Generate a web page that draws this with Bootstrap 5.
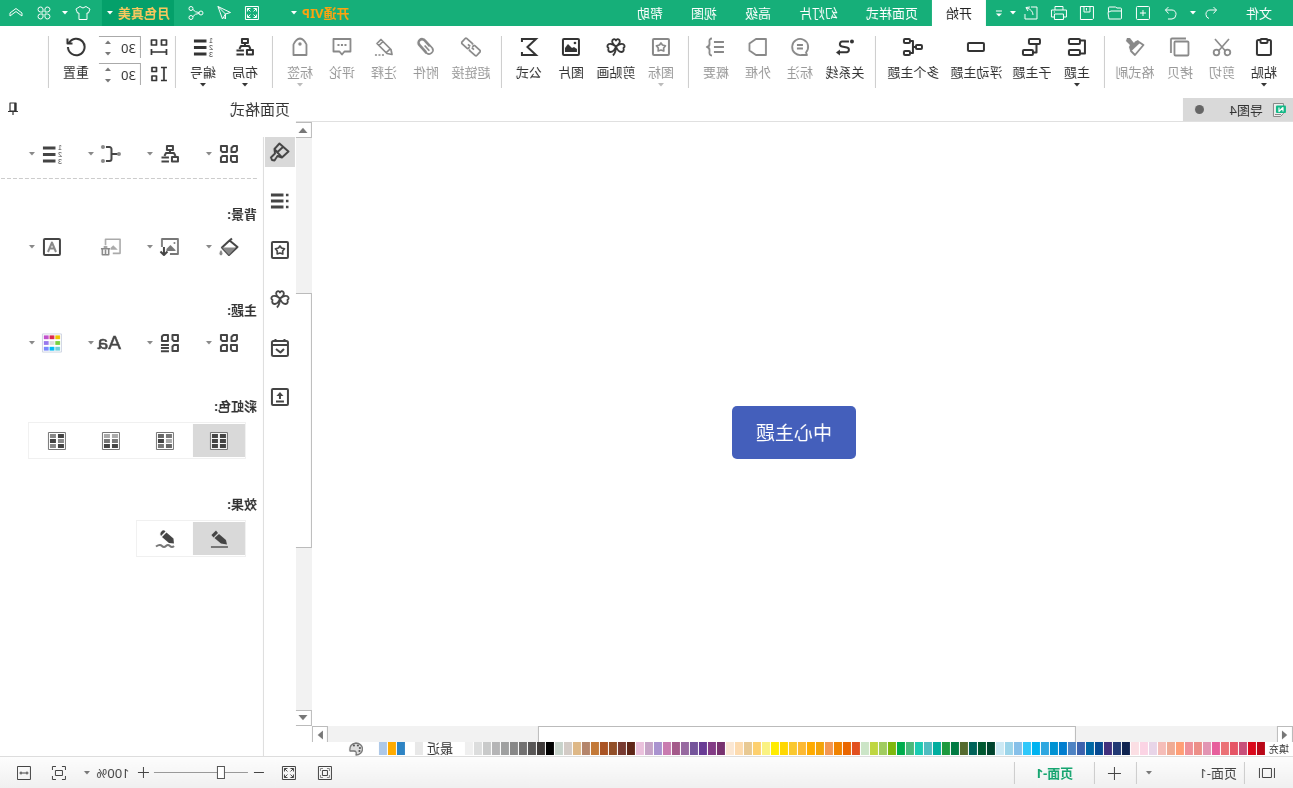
<!DOCTYPE html>
<html lang="zh-CN">
<head>
<meta charset="utf-8">
<meta name="viewport" content="width=device-width, initial-scale=1">
<title>导图4</title>
<link href="https://cdn.jsdelivr.net/npm/bootstrap@5.3.0/dist/css/bootstrap.min.css" rel="stylesheet">
<script src="https://cdn.jsdelivr.net/npm/bootstrap@5.3.0/dist/js/bootstrap.bundle.min.js"></script>
<style>
body{font-family:"Noto Sans","Noto Sans CJK SC",sans-serif;font-size:13px;line-height:20px;color:#333;background:#fff;overflow:hidden}
.mm-app{transform:scaleX(-1)}
button,input,select{font:inherit;color:inherit}
.mm-app button{border:0;background:none;padding:0;white-space:nowrap}
svg{display:block;flex:none;fill:none;stroke:currentColor;stroke-width:2;stroke-linejoin:round}
.ic{width:20px;height:20px}
.caret{width:8px;height:4px;fill:currentColor;stroke:none}
.flip{rotate:180deg}.turn-r{rotate:90deg}.turn-l{rotate:-90deg}
.titlebar{height:26px;background:#16af79;color:#fff}
.titlebar svg.ic{stroke-width:1}
.q-btn{width:28px;height:26px;display:flex;align-items:center;justify-content:center}
.more-btn{width:23px}
.tab-btn{height:26px;padding:0 14px!important}
.tab-btn.active{background:#fff!important;color:#222}
.file-btn{width:68px;height:26px}
.vip{color:#ffa30f;font-weight:700}
.user-btn{width:72px;height:26px;margin-right:9px;background:#04a06a!important;color:#fac85e;font-weight:700}
.apps-btn{margin-left:3px}
.fold-btn{margin-right:2px}
.ribbon{height:72px;padding-left:2px}
.r-group{height:52px;margin-top:10px;padding:0 6px;border-right:1px solid #ccc}
.r-item{width:42px;height:52px;color:#333;padding-top:1px!important}
.r-item span{margin:5px 0 1px}
.r-item.w3{width:48px}.r-item.w4{width:63px}
.r-item.off{color:#999}
.r-item.off svg{color:#888}
.r-item.off svg.caret{color:#bbb}
.spins{gap:5px}
.spin{width:42px;height:22px;border-top:1px solid #aaa;border-left:1px solid #aaa}
.spin input{width:28px;border:0;padding:0 0 0 4px;outline:0;background:none}
.spin .caret{color:#777}
.reset-btn{margin-left:2px}
.doc-tabs{height:24px;border-bottom:1px solid #e0e0e0}
.doc-tab{width:110px;height:23px;padding-left:4px;gap:6px;background:#d9d9d9}
.dot{width:9px;height:9px;border-radius:50%;background:#666;margin-right:12px}
.node{position:absolute;left:437px;top:284px;width:124px;height:53px;border-radius:5px;background:#445fbb;color:#fff;font-size:19px;line-height:54px;text-align:center}
.vbar{width:16px;background:#f2f2f2}
.hbar{height:16px;background:#f2f2f2}
.sb-corner{width:16px}
.sb-btn{width:16px;height:16px;background:#fff;border:1px solid #bbb;color:#777;display:flex;align-items:center;justify-content:center}
.sb-btn .caret{width:12px;height:6px}
.vbar .sb-btn{border-right:0}.hbar .sb-btn{border-bottom:0}
.v-thumb{background:#fff;border:1px solid #bbb;border-right:0}
.h-thumb{background:#fff;border:1px solid #bbb;border-bottom:0}
.swatches{height:14px}
.sw-list{gap:1px}
.sw-list i{width:8px;height:13px}
.fill-label{font-size:10px;line-height:14px;width:24px}
.side{width:296px}
.side-title{height:39px;font-size:15px;line-height:22px;padding:0 3px 0 6px}
.side-nav{width:32px;gap:19px}
.side-nav button,.nav-cell{width:30px;height:30px;display:flex;align-items:center;justify-content:center;color:#444}
.side-nav .active{background:#d9d9d9}
.side-body{border-left:1px solid #ddd;padding:7px 0 0 6px}
.p-row button{width:59px;height:20px;display:flex;align-items:center;gap:6px;padding-left:18px;color:#444}
.p-row .caret{color:#888}
.p-head{font-size:13px;font-weight:700;height:20px;margin:43px 0 0;line-height:20px}
.p-head+.p-row{margin-top:13px}
.p-head+.seg{margin-top:6px}
.dash{height:1px;margin:14px 0 -18px;background:repeating-linear-gradient(90deg,#ccc 0 4px,transparent 4px 6px)}
.seg+.p-head{margin-top:35px}
.seg{border:1px solid #f0f0f0;padding:1px 2px 1px 0;height:37px;margin-left:11px;gap:2px;width:fit-content}
.seg button{width:52px;height:33px;display:flex;align-items:center;justify-content:center;color:#444}
.seg .active{background:#d9d9d9!important}
.statusbar{height:32px;border-top:1px solid #ddd;background:linear-gradient(#fdfdfd,#f0f0f0);color:#444}
.statusbar svg{stroke-width:1}
.statusbar .caret{color:#777}
.vsep{width:1px;height:22px;background:#ccc}
.page-sel{width:87px;border:0;background:none;appearance:none;outline:0;padding:0 0 0 3px}
.add-btn{width:41px}
.page-on{width:79px;color:#16a570!important;font-weight:700}
.zoom-range{width:94px;height:14px;margin:0 3px;appearance:none;background:linear-gradient(#999,#999) center/100% 1px no-repeat}
.zoom-range::-webkit-slider-thumb{appearance:none;width:8px;height:13px;border:1px solid #555;background:#fff}
.zm{width:16px;display:flex;justify-content:center}
.zm-val{width:44px}
.fit-center{margin-left:10px}
.fit-width{margin:0 10px 0 7px}
.aa{font:19px/20px "Liberation Sans",sans-serif;-webkit-text-stroke:.5px;width:20px}
.svg-store{position:absolute}
</style>
</head>
<body>
<svg width="0" height="0" class="svg-store" aria-hidden="true">
<symbol id="caret" viewBox="0 0 8 4"><path d="M1 0h6L4 3.500z"/></symbol>
<symbol id="undo" viewBox="0 0 20 20"><path d="M7.500 4L4.500 7l3 3.500M4.500 7H11a4 4 0 0 1 4 4.500q0 3-3 4"/></symbol>
<symbol id="redo" viewBox="0 0 20 20"><path d="M12.500 4l3 3-3 3.500M15.500 7H9a4 4 0 0 0-4 4.500q0 4 4 4.500h4"/></symbol>
<symbol id="newf" viewBox="0 0 20 20"><rect x="3.500" y="3.500" width="13" height="13" rx="1"/><path d="M10 7v6M7 10h6"/></symbol>
<symbol id="open" viewBox="0 0 20 20"><path d="M3.500 15.500V8H14l3 1.500-1 6.500H4.500zM3.500 9V6q0-1 1-1H8l1.500-1h6q1 0 1 1v4"/></symbol>
<symbol id="save" viewBox="0 0 20 20"><path d="M3.500 3.500h13v13h-12l-1-1zM7 3.500V9h6V3.500M10.500 5v2.500"/></symbol>
<symbol id="print" viewBox="0 0 20 20"><path d="M6 7V3.500h8V7M5.500 14h-3V7h15v7h-3M5.500 11h9v5.500h-9zM14 9h1"/></symbol>
<symbol id="export" viewBox="0 0 20 20"><path d="M10 4H4v12h12v-5M8 12q0-5 6-7m-3-1l4 .5-2 3.500"/></symbol>
<symbol id="more" viewBox="0 0 20 20"><path d="M7 8h6"/><path d="M7 10.500h6L10 13.500z" fill="currentColor" stroke="none"/></symbol>
<symbol id="expand" viewBox="0 0 20 20"><rect x="3.500" y="3.500" width="13" height="13"/><path d="M5.500 8.500v-3h3M11.500 5.500h3v3M14.500 11.500v3h-3M8.500 14.500h-3v-3M5.500 5.500l3 3M14.500 5.500l-3 3M14.500 14.500l-3-3M5.500 14.500l3-3"/></symbol>
<symbol id="send" viewBox="0 0 20 20"><path d="M16 3.500L3.500 9.500l5 1.500 3 5zM16 3.500L8.500 11v5l2-2"/></symbol>
<symbol id="share" viewBox="0 0 20 20"><circle cx="5" cy="10" r="2"/><circle cx="15" cy="5.500" r="2"/><circle cx="15" cy="14.500" r="2"/><path d="M7 9.500q4 0 6-3M7 10.500q4 0 6 3"/></symbol>
<symbol id="shirt" viewBox="0 0 20 20"><path d="M7 3.500L3 6l1.500 4H6v6.500h8V10h1.500L17 6l-4-2.500q-3 3-6 0z"/></symbol>
<symbol id="clover4" viewBox="0 0 20 20"><path d="M9 9V6a2.500 2.500 0 1 0-2.500 3zM11 9V6a2.500 2.500 0 1 1 2.500 3zM9 11v3a2.500 2.500 0 1 1-2.500-3zM11 11v3a2.500 2.500 0 1 0 2.500-3z"/></symbol>
<symbol id="chev" viewBox="0 0 20 20"><path d="M4 10l6-4.500 6 4.500v3l-6-4.500-6 4.500z"/></symbol>
<symbol id="paste" viewBox="0 0 20 20"><rect x="3" y="3" width="14" height="15" rx="1.500"/><rect x="6.500" y="2" width="7" height="4" rx="1" fill="#fff"/></symbol>
<symbol id="cut" viewBox="0 0 20 20"><path stroke-width="1.600" d="M3 2l10.500 12M17 2L6.500 14"/><g stroke-width="1.800"><circle cx="4.500" cy="15.500" r="2.800"/><circle cx="15.500" cy="15.500" r="2.800"/></g></symbol>
<symbol id="copy" viewBox="0 0 20 20"><g stroke-width="1.800"><rect x="1.500" y="4.500" width="14" height="14" rx="1"/><path d="M4 1.500h14a1 1 0 0 1 1 1V16"/></g></symbol>
<symbol id="brush" viewBox="0 0 20 20"><path d="M6 5L1.500 8 10 18l4-4" stroke-width="1.800"/><path d="M7 3l3 1.500L11 6l4-5 3 0 1 3-4 4 1 2-1.500 5L4.500 5.500z" fill="currentColor" stroke="none"/></symbol>
<symbol id="topic" viewBox="0 0 20 20"><rect x="7" y="2" width="11" height="5" rx="1"/><rect x="7" y="13" width="11" height="5" rx="1"/><path d="M7 3.500H2v13h5"/></symbol>
<symbol id="sub" viewBox="0 0 20 20"><rect x="2" y="2" width="11" height="5" rx="1"/><rect x="9" y="13" width="10" height="5" rx="1"/><path d="M5.500 7v8.500H9"/></symbol>
<symbol id="float" viewBox="0 0 20 20"><rect x="2" y="6" width="16" height="8" rx="1"/></symbol>
<symbol id="multi" viewBox="0 0 20 20"><rect x="1" y="8" width="6" height="4" rx="1"/><rect x="13" y="2" width="6" height="4" rx="1"/><rect x="13" y="14" width="6" height="4" rx="1"/><path d="M7 10h3M13 4h-3v12h3"/></symbol>
<symbol id="rel" viewBox="0 0 20 20"><path d="M6 4.500h6a2.500 2.500 0 0 1 1 5L8 10.500a2.400 2.400 0 0 0 0 4.700h7"/><circle cx="3" cy="4.500" r="1" fill="currentColor"/><path d="M15 12.500l4 3-4 3z" fill="currentColor" stroke="none"/></symbol>
<symbol id="note" viewBox="0 0 20 20"><g stroke-width="1.800"><path d="M4 15.500A8 8 0 1 1 8 17.800L3 18z"/><path d="M7 8h6M7 11.500h6"/></g></symbol>
<symbol id="frame" viewBox="0 0 20 20"><path stroke-width="1.800" d="M2 2h10l6.500 4.500v7L12 18H2z"/></symbol>
<symbol id="brace" viewBox="0 0 20 20"><g stroke-width="1.800"><path d="M2 5h10M2 10h10M2 15h10M14 1.500q3 0 2.500 4-.5 4 2.500 4.500-3 .5-2.500 4.500.5 4-2.500 4"/></g></symbol>
<symbol id="star" viewBox="0 0 20 20"><rect x="2" y="2" width="16" height="16" rx="1"/><path d="M10 6l1.500 2 3 .8-1.800 2.200.1 3-2.800-1-2.800 1 .1-3L5.500 8.800l3-.8z" stroke-width="1.700"/></symbol>
<symbol id="clover" viewBox="0 0 20 20"><path stroke-width="1.800" d="M10 9.500Q5 6 6.500 3.200 8.500 1 10 3.500 11.500 1 13.500 3.200 15 6 10 9.500zM10 9.500Q6 6 3 7q-3 2-.5 4-1 3.500 2 4Q8 15 10 9.500zM10 9.500Q14 6 17 7q3 2 .5 4 1 3.500-2 4Q12 15 10 9.500zM10 9.500q0 6 3 9"/></symbol>
<symbol id="image" viewBox="0 0 20 20"><rect x="2" y="2" width="16" height="16" rx="1"/><path d="M4 15v-3l3-2 2 1 4-4 3 4v4z" fill="currentColor" stroke="none"/><circle cx="6" cy="6" r="1.300" fill="currentColor" stroke="none"/></symbol>
<symbol id="sigma" viewBox="0 0 20 20"><path d="M17 5V2H3l8.500 8L3 18h14v-3" stroke-linejoin="miter"/></symbol>
<symbol id="link" viewBox="0 0 20 20"><g stroke-width="1.700" transform="rotate(-42 10 10)"><path d="M9 12.500v1H1a1 1 0 0 1-1-1v-5a1 1 0 0 1 1-1h7a1 1 0 0 1 1 1V9M11 7.500v-1h8a1 1 0 0 1 1 1v5a1 1 0 0 1-1 1h-7a1 1 0 0 1-1-1V11M6 10h3M11 10h3"/></g></symbol>
<symbol id="clip" viewBox="0 0 20 20"><path stroke-width="1.700" transform="rotate(42 10 10)" d="M7 12V4a3 3 0 0 1 6 0v10M13.500 8V15a3.800 3.800 0 0 1-7.500 0V4.500a4 4 0 0 1 8-.5v11M10 8v7"/></symbol>
<symbol id="pencil" viewBox="0 0 20 20"><g stroke-width="1.700"><path d="M2 17.500l1-5L13 2.500l4 4-10 10zM11 4.500l4 4M4 12l4 4"/><path d="M10 18h9" stroke-dasharray="2 1.500"/></g></symbol>
<symbol id="comment" viewBox="0 0 20 20"><g stroke-width="1.800"><path d="M1.500 2h17v12.500h-6L10 17.500l-2.500-3h-6z"/><path d="M5.500 8h9" stroke-dasharray="2 1.500"/></g></symbol>
<symbol id="tag" viewBox="0 0 20 20"><path stroke-width="1.800" d="M3.500 18V7.500Q6 2 10 1.500q4 .5 6.500 6V18z"/><circle cx="10" cy="7" r="1.700" fill="currentColor" stroke="none"/></symbol>
<symbol id="org" viewBox="0 0 20 20"><rect x="7" y="2" width="6" height="4"/><path d="M10 6v3M4.500 12L6 9h8l1.500 3"/><rect x="2" y="13" width="6" height="4.500"/><path d="M11 13.500h7.500M11 17.500h7.500"/></symbol>
<symbol id="hgap" viewBox="0 0 20 20"><g stroke-width="1.700"><rect x="2.500" y="3" width="5" height="5"/><rect x="12.500" y="3" width="5" height="5"/><path d="M2.500 12v6M17.500 12v6M2.500 15h15"/></g></symbol>
<symbol id="vgap" viewBox="0 0 20 20"><g stroke-width="1.700"><path d="M2 3.500h6M2 16.500h6M5 3.500v13"/><rect x="12.500" y="3.500" width="4.500" height="4"/><rect x="12.500" y="12" width="4.500" height="4.500"/></g></symbol>
<symbol id="reset" viewBox="0 0 20 20"><path d="M17 6A8.300 8.300 0 1 0 18 10M18.500 1.500v5h-5"/></symbol>
<symbol id="pin" viewBox="0 0 20 20"><path stroke-width="1.200" d="M7 5h6v8H7zM5 13.500h10M10 13v4"/><path d="M7.800 5v8" stroke-width="2"/></symbol>
<symbol id="doc" viewBox="0 0 20 20"><path d="M5.500 3.500h10v13h-7l-3-3z" stroke="#888" stroke-width="1" fill="#eee"/><path d="M8 14.500h6" stroke="#888" stroke-width="1"/><rect x="3" y="5.500" width="10" height="7.500" rx="1" fill="#12b886" stroke="none"/><path d="M6 11.500v-4l4 4v-4" stroke="#fff" stroke-width="1.200"/></symbol>
<symbol id="fmt" viewBox="0 0 20 20"><path stroke-width="1.900" d="M10.500 1.500L1.500 9.500l6.500 6 7.500-8.500zM7 5l6.500 6M15.500 7.500l-.5 4 4 4-1 2.500-2.500.5-3-4.500-4.500 1.500"/></symbol>
<symbol id="list" viewBox="0 0 20 20"><path d="M6.500 4H19M6.500 10H19M6.500 16H19" stroke-width="2.800"/><path d="M1.500 4H4M1.500 10H4M1.500 16H4" stroke-width="2.400"/></symbol>
<symbol id="cal" viewBox="0 0 20 20"><rect x="2" y="3" width="16" height="15" rx="1.500"/><path d="M2 7h16M5.500 1v3M14.500 1v3M6 11l3.500 3.500L14 11" /></symbol>
<symbol id="up" viewBox="0 0 20 20"><rect x="2" y="2" width="16" height="16" rx="1"/><path d="M10 12V7M6 14.500h8"/><path d="M6.500 9L10 5l3.500 4z" fill="currentColor" stroke="none"/></symbol>
<symbol id="grid4" viewBox="0 0 20 20"><path d="M2 2h3.500l2 2v4H3.500L2 6.500zM12 2h6v4.500L16.500 8H12zM2 12h6v4.500L6.500 18H2zM12 12h4.500L18 13.500V18h-6z"/></symbol>
<symbol id="gridl" viewBox="0 0 20 20"><path d="M2 2h5.500v4.500L6 8H2zM12 2h4.500L18 3.500V8h-6zM2 12h4l1.500 1.500V18H2zM11 12h8M11 15h8M11 18.200h8"/></symbol>
<symbol id="branch" viewBox="0 0 20 20"><path d="M3 10h6M15 3h-3.500a2 2 0 0 0-2 2v10a2 2 0 0 0 2 2H15"/><g fill="#888" stroke="none"><circle cx="2" cy="10" r="2"/><circle cx="18" cy="3" r="2"/><circle cx="18" cy="17" r="2"/></g></symbol>
<symbol id="bucket" viewBox="0 0 20 20"><path d="M7 1.500l3 2.500 7 6.500L10 18l-8.500-8L10 3"/><path d="M3 10.500h14L10 18z" fill="#888" stroke="none"/><path d="M18 13q3 4 0 5.500-3-1.500 0-5.500z" fill="#888" stroke="none"/></symbol>
<symbol id="imgdown" viewBox="0 0 20 20"><path d="M10 17H2V2h16v8" stroke="#777" stroke-width="1.800"/><path d="M4.500 13l5-5 4 4v2h-9z" fill="#777" stroke="none"/><circle cx="5.500" cy="6" r="1" fill="#777" stroke="none"/><path d="M16 10v7M12.500 14.500L16 18l3.500-3.500"/></symbol>
<symbol id="imgdel" viewBox="0 0 22 20"><path d="M9 17H1V1.500h16v6.500" stroke="#aaa" stroke-width="1.800"/><path d="M3.500 13l5-5 3 3v2z" fill="#aaa" stroke="none"/><path d="M12 12h10M15 10h4M13.500 12v6.500h7V12M17 13v5" stroke="#888" stroke-width="1.700"/></symbol>
<symbol id="boxa" viewBox="0 0 20 20"><rect x="2" y="2" width="16" height="16" rx="1"/><path d="M6 15l4-9.500L14 15M7.500 11.500h5" stroke="#888"/></symbol>
<symbol id="colors" viewBox="0 0 21 20"><rect x=".5" y=".5" width="20" height="19" stroke="#ccd3e0" stroke-width="1"/><g stroke="none"><path fill="#ecc400" d="M2 2h5v4H2z"/><path fill="#dc2850" d="M8 2h5v4H8z"/><path fill="#c050cc" d="M14 2h5v4h-5z"/><path fill="#78d040" d="M2 8h5v4H2z"/><path fill="#ddd" d="M8 8h5v4H8z"/><path fill="#9878ec" d="M14 8h5v4h-5z"/><path fill="#6cd0dc" d="M2 14h5v4H2z"/><path fill="#00bcf4" d="M8 14h5v4H8z"/><path fill="#7888fc" d="M14 14h5v4h-5z"/></g></symbol>
<symbol id="tile" viewBox="0 0 20 20"><rect x="1.500" y="1.500" width="17" height="17" fill="#fff" fill-opacity=".7" stroke="#777" stroke-width="1"/><g stroke="none"><path fill="var(--a)" d="M3 3h6v4H3z"/><path fill="var(--b)" d="M11 3h6v4h-6z"/><path fill="var(--c)" d="M3 8h6v4H3z"/><path fill="var(--d)" d="M11 8h6v4h-6z"/><path fill="var(--e)" d="M3 13h6v4H3z"/><path fill="var(--f)" d="M11 13h6v4h-6z"/></g></symbol>
<symbol id="pen1" viewBox="0 0 20 20"><path d="M1 18h17" stroke="#777"/><path d="M2 15.500l1-4.500L10 5l4.500 4-6.500 5.500zM11 4l2-2.500L17.500 6l-2 2.500z" fill="currentColor" stroke="none"/></symbol>
<symbol id="pen2" viewBox="0 0 20 20"><path d="M1 17q2 2 4 0t4 0 4 0 6 .5" stroke="#777"/><path d="M1 14.500l.5-5L8.500 3.500 13 8l-7 6zM9.500 2.500q2-2.500 4 0 2 2 .5 4.500z" fill="currentColor" stroke="none"/></symbol>
<symbol id="palette" viewBox="0 0 20 20"><path d="M10 4a6.500 6 0 1 0 0 12q-1-4 2-4h4Q17 5 10 4z" fill="#ddd" stroke="#777" stroke-width="1.300"/><path d="M6 9h.1M8 6.500h.1M12 6.500h.1M6.500 12h.1" stroke="#555" stroke-linecap="round"/></symbol>
<symbol id="slides" viewBox="0 0 20 20"><path d="M5.500 5.500h9v9h-9zM2.500 5v10M17.500 5v10"/></symbol>
<symbol id="plus" viewBox="0 0 20 20"><path d="M10.500 4v13M4 10.500h13"/></symbol>
<symbol id="fitp" viewBox="0 0 20 20"><rect x="3.500" y="3.500" width="13" height="13"/><rect x="7.500" y="7.500" width="5" height="5"/><path d="M5.500 8V5.500H8M12 5.500h2.500V8M14.500 12v2.500H12M8 14.500H5.500V12" stroke="#888"/></symbol>
<symbol id="fitc" viewBox="0 0 20 20"><rect x="6.500" y="7.500" width="7" height="5"/><path d="M3.500 7V3.500H7M13 3.500h3.500V7M16.500 13v3.500H13M7 16.500H3.500V13"/></symbol>
<symbol id="fitw" viewBox="0 0 20 20"><rect x="3.500" y="3.500" width="13" height="13"/><path d="M5.500 10h9M7 8.500v3M13 8.500v3"/></symbol>
</svg>

<div class="mm-app d-flex flex-column vh-100">
<header class="titlebar d-flex align-items-center">
 <button class="file-btn">文件</button>
 <button class="q-btn" aria-label="撤销"><svg class="ic"><use href="#undo"/></svg></button>
 <button class="me-1" aria-label="撤销列表"><svg class="caret"><use href="#caret"/></svg></button>
 <button class="q-btn" aria-label="恢复"><svg class="ic"><use href="#redo"/></svg></button>
 <button class="q-btn" aria-label="新建"><svg class="ic"><use href="#newf"/></svg></button>
 <button class="q-btn" aria-label="打开"><svg class="ic"><use href="#open"/></svg></button>
 <button class="q-btn" aria-label="保存"><svg class="ic"><use href="#save"/></svg></button>
 <button class="q-btn" aria-label="打印"><svg class="ic"><use href="#print"/></svg></button>
 <button class="q-btn" aria-label="导出"><svg class="ic"><use href="#export"/></svg></button>
 <button aria-label="导出列表"><svg class="caret"><use href="#caret"/></svg></button>
 <button class="more-btn" aria-label="更多"><svg class="ic"><use href="#more"/></svg></button>
 <nav class="d-flex">
  <button class="tab-btn active">开始</button><button class="tab-btn">页面样式</button><button class="tab-btn">幻灯片</button><button class="tab-btn">高级</button><button class="tab-btn">视图</button><button class="tab-btn">帮助</button>
 </nav>
 <button class="vip ms-auto d-flex align-items-center gap-1 me-4">开通VIP <svg class="caret text-white"><use href="#caret"/></svg></button>
 <button class="q-btn" aria-label="全屏"><svg class="ic"><use href="#expand"/></svg></button>
 <button class="q-btn" aria-label="发送"><svg class="ic"><use href="#send"/></svg></button>
 <button class="q-btn me-2" aria-label="分享"><svg class="ic"><use href="#share"/></svg></button>
 <button class="user-btn d-flex align-items-center justify-content-center gap-1">月色真美<svg class="caret text-white"><use href="#caret"/></svg></button>
 <button aria-label="皮肤" class="d-flex align-items-center gap-1"><svg class="ic"><use href="#shirt"/></svg><svg class="caret"><use href="#caret"/></svg></button>
 <button class="q-btn apps-btn" aria-label="应用"><svg class="ic"><use href="#clover4"/></svg></button>
 <button class="q-btn fold-btn" aria-label="收起"><svg class="ic"><use href="#chev"/></svg></button>
</header>

<div class="ribbon d-flex">
 <div class="r-group d-flex" data-items="paste:粘贴:v,cut:剪切:x,copy:拷贝:x,brush:格式刷:x"></div>
 <div class="r-group d-flex" data-items="topic:主题:v,sub:子主题,float:浮动主题,multi:多个主题"></div>
 <div class="r-group d-flex" data-items="rel:关系线,note:标注:x,frame:外框:x,brace:概要:x"></div>
 <div class="r-group d-flex" data-items="star:图标:xv,clover:剪贴画,image:图片,sigma:公式"></div>
 <div class="r-group d-flex" data-items="link:超链接:x,clip:附件:x,pencil:注释:x,comment:评论:x,tag:标签:xv"></div>
 <div class="r-group d-flex" data-items="org:布局:v,nums:编号:v"></div>
 <div class="r-group d-flex">
  <div class="spins d-flex flex-column">
   <div class="d-flex align-items-center"><label for="hg" class="me-2" aria-label="水平间距"><svg class="ic"><use href="#hgap"/></svg></label><div class="spin d-flex align-items-center"><input id="hg" value="30"><div class="d-flex flex-column gap-2"><button aria-label="增加"><svg class="caret flip"><use href="#caret"/></svg></button><button aria-label="减少"><svg class="caret"><use href="#caret"/></svg></button></div></div></div>
   <div class="d-flex align-items-center"><label for="vg" class="me-2" aria-label="垂直间距"><svg class="ic"><use href="#vgap"/></svg></label><div class="spin d-flex align-items-center"><input id="vg" value="30"><div class="d-flex flex-column gap-2"><button aria-label="增加"><svg class="caret flip"><use href="#caret"/></svg></button><button aria-label="减少"><svg class="caret"><use href="#caret"/></svg></button></div></div></div>
  </div>
  <button class="r-item reset-btn d-flex flex-column align-items-center"><svg class="ic"><use href="#reset"/></svg><span>重置</span></button>
 </div>
</div>

<div class="d-flex flex-fill">
 <main class="d-flex flex-column flex-fill">
  <div class="doc-tabs d-flex"><div class="doc-tab d-flex align-items-center"><svg class="ic"><use href="#doc"/></svg><span>导图4</span><span class="dot ms-auto"></span></div></div>
  <div class="d-flex flex-fill">
   <div class="position-relative flex-fill"><div class="node">中心主题</div></div>
   <div class="vbar d-flex flex-column"><span class="sb-btn"><svg class="caret flip"><use href="#caret"/></svg></span><span style="flex:155"></span><span class="v-thumb" style="flex:254"></span><span style="flex:162"></span><span class="sb-btn"><svg class="caret"><use href="#caret"/></svg></span></div>
  </div>
  <div class="d-flex"><div class="hbar d-flex flex-fill"><span class="sb-btn"><svg class="caret turn-r"><use href="#caret"/></svg></span><span style="flex:201"></span><span class="h-thumb" style="flex:538"></span><span style="flex:210"></span><span class="sb-btn"><svg class="caret turn-l"><use href="#caret"/></svg></span></div><div class="sb-corner"></div></div>
  <div class="swatches d-flex ps-1"><span class="fill-label">填充</span><div class="sw-list d-flex" id="fills"></div><span class="px-1 ms-2 lh-1">最近</span><div class="sw-list d-flex" id="recent"></div><svg class="ms-3" width="14" height="14" viewBox="3 3 14 14"><use href="#palette" width="20" height="20"/></svg></div>
 </main>
 <aside class="side d-flex flex-column">
  <div class="side-title d-flex justify-content-between align-items-start"><span>页面格式</span><button aria-label="固定"><svg class="ic"><use href="#pin"/></svg></button></div>
  <div class="d-flex flex-fill">
   <nav class="side-nav d-flex flex-column align-items-center">
    <button class="active" aria-label="页面格式"><svg class="ic"><use href="#fmt"/></svg></button>
    <button aria-label="大纲"><svg class="ic"><use href="#list"/></svg></button><button aria-label="图标"><svg class="ic"><use href="#star"/></svg></button><button aria-label="剪贴画"><svg class="ic"><use href="#clover"/></svg></button><button aria-label="任务"><svg class="ic"><use href="#cal"/></svg></button><button aria-label="导出"><svg class="ic"><use href="#up"/></svg></button>
   </nav>
   <div class="side-body flex-fill">
    <div class="p-row d-flex" data-icons="grid4,org,branch,nums"></div>
    <div class="dash"></div>
    <h2 class="p-head">背景:</h2>
    <div class="p-row d-flex" data-icons="bucket,imgdown,imgdel-,boxa"></div>
    <h2 class="p-head">主题:</h2>
    <div class="p-row d-flex" data-icons="grid4,gridl,Aa,colors"></div>
    <h2 class="p-head">彩虹色:</h2>
    <div class="seg d-flex">
     <button class="active" style="--a:#444;--b:#444;--c:#444;--d:#444;--e:#444;--f:#444" aria-label="配色一"><svg class="ic"><use href="#tile"/></svg></button>
     <button style="--a:#777;--b:#666;--c:#aaa;--d:#444;--e:#666;--f:#777" aria-label="配色二"><svg class="ic"><use href="#tile"/></svg></button>
     <button style="--a:#aaa;--b:#aaa;--c:#777;--d:#777;--e:#444;--f:#444" aria-label="配色三"><svg class="ic"><use href="#tile"/></svg></button>
     <button style="--a:#444;--b:#888;--c:#888;--d:#444;--e:#444;--f:#888" aria-label="配色四"><svg class="ic"><use href="#tile"/></svg></button>
    </div>
    <h2 class="p-head">效果:</h2>
    <div class="seg d-flex"><button class="active" aria-label="直线"><svg class="ic"><use href="#pen1"/></svg></button><button aria-label="手绘"><svg class="ic"><use href="#pen2"/></svg></button></div>
   </div>
  </div>
 </aside>
</div>

<footer class="statusbar d-flex align-items-center">
 <button class="ms-3 me-2 pe-1" aria-label="页面列表"><svg class="ic"><use href="#slides"/></svg></button>
 <span class="vsep"></span>
 <select class="page-sel ms-1" aria-label="页面"><option>页面-1</option></select><svg class="caret me-2"><use href="#caret"/></svg>
 <span class="vsep"></span>
 <button class="add-btn d-flex justify-content-center" aria-label="添加页面"><svg class="ic"><use href="#plus"/></svg></button>
 <span class="vsep"></span>
 <button class="page-on">页面-1</button>
 <span class="vsep"></span>
 <div class="ms-auto d-flex align-items-center">
  <button class="q-btn me-2" aria-label="适应页面"><svg class="ic"><use href="#fitp"/></svg></button>
  <button class="q-btn me-2" aria-label="全屏"><svg class="ic"><use href="#expand"/></svg></button>
  <button class="zm" aria-label="缩小"><svg width="12" height="12" viewBox="0 0 12 12"><path d="M1 5.500h10"/></svg></button>
  <input type="range" class="zoom-range" min="0" max="100" value="27" aria-label="缩放">
  <button class="zm" aria-label="放大"><svg width="12" height="12" viewBox="0 0 12 12"><path d="M0 5.500h11M5.500 0v11"/></svg></button>
  <button class="zm-val">100%</button><svg class="caret"><use href="#caret"/></svg>
  <button class="q-btn fit-center" aria-label="居中"><svg class="ic"><use href="#fitc"/></svg></button>
  <button class="q-btn fit-width" aria-label="适应宽度"><svg class="ic"><use href="#fitw"/></svg></button>
 </div>
</footer>
</div>
<script>
const numbered='<svg class="ic" viewBox="0 0 20 20"><path d="M6.500 4H19M6.500 10.500H19M6.500 17H19" stroke-width="3"/><g fill="currentColor" stroke="none" font-family="Liberation Sans" font-size="7"><text x="0" y="6">1</text><text x="0" y="13">2</text><text x="0" y="20">3</text></g></svg>';
const ico=(n,c='ic')=>n==='nums'?numbered:`<svg class="${c}"><use href="#${n}"/></svg>`;
document.querySelectorAll('[data-items]').forEach(g=>{
 g.innerHTML=g.dataset.items.split(',').map(s=>{
  const [i,t,f='']=s.split(':');
  return `<button class="r-item w${t.length} ${f.includes('x')?'off':''} d-flex flex-column align-items-center">${ico(i)}<span>${t}</span>${f.includes('v')?ico('caret','caret'):''}</button>`;
 }).join('');
});
document.querySelectorAll('[data-icons]').forEach(g=>{
 g.innerHTML=g.dataset.icons.split(',').map(n=>{
  const bare=n.endsWith('-'),id=n.replace('-','');
  return `<button aria-label="${id}">${id==='Aa'?'<span class="aa">Aa</span>':ico(id)}${bare?'':ico('caret','caret')}</button>`;
 }).join('');
});
const paint=(id,s)=>document.getElementById(id).innerHTML=s.split(' ').map(c=>`<i style="background:#${c}"></i>`).join('');
paint('fills','b90718 da091b c8507a e65566 eb7176 e75f9c e295b3 ec8f88 ee9199 ff9f76 efab94 f5bdb8 e8d5e8 fbd4e4 fbdfe4 0f2350 213974 41307d 074a92 0068a5 3c62ad 4e83c3 007dcf 0092d3 2ea7e0 00b3f0 2fc8fa 87c0e9 9cd5ea cce9f4 00442e 005830 006359 556b2f 007b43 1d9a3e 00ae9f 4fbcc0 1bcbb2 49b97b 00ad4d 7fb80e a1cc60 bfd641 cce5c7 e2501f ea6700 f08300 f39752 f3a40a ffab00 fdb933 fac82f ffd700 ffec00 faf282 fdd06f e8c993 fddbaf fbe7d3 78326f 833c86 693c95 75559b 9769a0 a45a8a c97bb0 a993cf c6a4c7 eac1dc 5f2617 783b32 924f28 aa5424 c37938 b4856b deb887 d3cbc6 c8d3cb 000000 3e3a39 595757 727171 888888 9fa0a0 b5b5b6 c9caca dcdddd efefef');
paint('recent','e8e8e8 ffffff 2e84c4 ffab00 adc8e8');
</script>
</body>
</html>
